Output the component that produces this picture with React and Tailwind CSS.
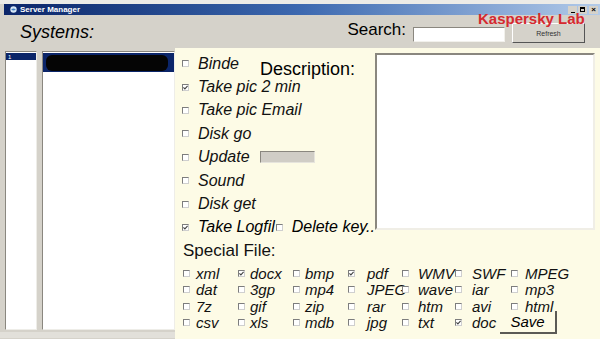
import React from 'react';

const Check = ({ on }) => (
  <span className="inline-flex h-[7px] w-[7px] shrink-0 items-center justify-center border border-t-[#7d7d7d] border-l-[#7d7d7d] border-r-[#cfcfcf] border-b-[#cfcfcf] bg-white">
    {on && (
      <svg width="5" height="5" viewBox="0 0 5 5">
        <path d="M0.4 2.4 L1.9 3.9 L4.6 0.9" fill="none" stroke="#444" strokeWidth="1.1" />
      </svg>
    )}
  </span>
);

const files = [
  [['xml'], ['docx', true], ['bmp'], ['pdf', true], ['WMV'], ['SWF'], ['MPEG']],
  [['dat'], ['3gp'], ['mp4'], ['JPEG'], ['wave'], ['iar'], ['mp3']],
  [['7z'], ['gif'], ['zip'], ['rar'], ['htm'], ['avi'], ['html']],
  [['csv'], ['xls'], ['mdb'], ['jpg'], ['txt'], ['doc', true]],
];

const labelGap = ['ml-[6px]', 'ml-[5px]', 'ml-[5px]', 'ml-[12px]', 'ml-[9px]', 'ml-[10px]', 'ml-[7px]'];

const Option = ({ label, on, children }) => (
  <div className="flex h-[23.4px] items-center">
    <Check on={on} />
    <span className="ml-[9px] whitespace-nowrap text-[16px] italic leading-none text-[#111]">{label}</span>
    {children}
  </div>
);

const App = () => {
  return (
    <div className="relative flex h-[339px] w-[600px] flex-col overflow-hidden bg-[#d5d2ca] font-['Liberation_Sans',Arial,sans-serif] text-black">
      {/* title bar */}
      <div className="h-[4px] bg-[#ecebe7]" />
      <div className="ml-[4px] flex h-[11px] items-center bg-linear-to-r from-[#0b2569] via-[#3d69b0] to-[#b3cbe9] pl-[6px] pr-[2px]">
        <svg width="7" height="7" viewBox="0 0 7 7">
          <circle cx="3.5" cy="3.5" r="3.2" fill="#d6e6f5" />
          <path d="M1.2 3.5 Q3.5 1.5 5.8 3.5 Q3.5 5.5 1.2 3.5Z" fill="#3f7fc4" />
        </svg>
        <span className="ml-[3px] text-[8px] font-bold leading-none text-white">Server Manager</span>
        <div className="ml-auto flex gap-[1px]">
          <span className="flex h-[8px] w-[9px] items-end justify-center bg-[#d5d2ca] pb-[1px]">
            <span className="h-[1px] w-[4px] bg-black" />
          </span>
          <span className="flex h-[8px] w-[9px] items-center justify-center bg-[#d5d2ca]">
            <span className="h-[5px] w-[5px] border border-t-2 border-black" />
          </span>
          <span className="ml-[1px] flex h-[8px] w-[9px] items-center justify-center bg-[#d5d2ca] text-[8px] font-bold leading-none">×</span>
        </div>
      </div>

      {/* header */}
      <div className="flex h-[33px] items-start">
        <span className="ml-[20px] mt-[8px] text-[18px] italic leading-none">Systems:</span>
        <div className="ml-auto flex items-start pr-[15px]">
          <span className="mt-[6px] text-[17px] leading-none">Search:</span>
          <div className="ml-[7px] mt-[12px] h-[15px] w-[92px] border border-t-[#8a877f] border-l-[#8a877f] border-r-[#f2f1ec] border-b-[#f2f1ec] bg-white" />
          <button className="ml-[7px] mt-[8px] flex h-[20px] w-[73px] items-center justify-center border border-t-white border-l-white border-r-[#555] border-b-[#555] bg-[#d5d2ca] text-[7px] leading-none text-[#333]">
            Refresh
          </button>
        </div>
      </div>
      <span className="absolute left-[478px] top-[11px] text-[15px] font-bold leading-none text-[#d5292f]">Kaspersky Lab</span>

      {/* body */}
      <div className="flex flex-1">
        <div className="flex w-[175px] flex-col">
          <div className="flex h-[282px] gap-[5px] pl-[5px] pt-[3px]">
            <div className="w-[32px] border border-t-[#8a877f] border-l-[#8a877f] border-r-[#eeede8] border-b-[#eeede8] bg-white pt-[1px]">
              <div className="flex h-[7px] items-center bg-[#0b2569] pl-[2px] text-[6px] leading-none text-white">1</div>
            </div>
            <div className="flex-1 border border-t-[#8a877f] border-l-[#8a877f] border-r-[#eeede8] border-b-[#eeede8] bg-white pt-[1px]">
              <div className="flex h-[19px] items-center bg-[#0b2569] px-[3px]">
                <div className="h-[16px] w-[122px] rounded-[6px] bg-[#050505]" />
              </div>
            </div>
          </div>
          <div className="mt-[2px] h-[6px] bg-[#e2e0da]" />
        </div>

        <div className="flex flex-1 flex-col bg-[#fdfbe6] pl-[7px] pt-[4px]">
          <div className="flex">
            <div className="relative z-10 w-[193px]">
              <Option label="Binde">
                <span className="ml-[21px] mt-[8px] self-start text-[18px] leading-none">Description:</span>
              </Option>
              <Option label="Take pic 2 min" on />
              <Option label="Take pic Email" />
              <Option label="Disk go" />
              <Option label="Update">
                <span className="ml-[10px] h-[12px] w-[55px] border border-t-[#8a877f] border-l-[#8a877f] border-r-[#e6e4dd] border-b-[#e6e4dd] bg-[#d0cdc6]" />
              </Option>
              <Option label="Sound" />
              <Option label="Disk get" />
              <div className="flex h-[23.4px] items-center">
                <div className="flex w-[99px] items-center overflow-hidden">
                  <Check on />
                  <span className="ml-[9px] whitespace-nowrap text-[16px] italic leading-none">Take Logfil</span>
                </div>
                <Check />
                <span className="ml-[9px] whitespace-nowrap bg-[#fdfbe6] text-[16px] italic leading-none">Delete key..</span>
              </div>
            </div>
            <div className="mt-[1px] h-[177px] w-[220px] border-2 border-t-[#8a877f] border-l-[#8a877f] border-r-[#f0eee6] border-b-[#f0eee6] bg-white" />
          </div>

          <div className="flex h-[23.4px] items-center pl-[1px]">
            <span className="text-[17px] leading-none text-[#111]">Special File:</span>
          </div>

          <div className="ml-[1px] mt-[3px] grid grid-cols-[55px_55px_55px_54px_53px_56px_60px] auto-rows-[16.3px]">
            {files.map((row, r) =>
              row.map(([name, on], c) => (
                <div key={`${r}-${c}`} className="flex items-center">
                  <Check on={on} />
                  <span className={`${labelGap[c]} whitespace-nowrap text-[15px] italic leading-none text-[#111]`}>{name}</span>
                </div>
              ))
            )}
            <div className="flex items-start">
              <button className="-ml-[11px] -mt-[3px] flex h-[23px] w-[57px] shrink-0 items-center justify-center border-r-2 border-b-2 border-[#5b5a55] text-[15px] italic leading-none">
                Save
              </button>
            </div>
          </div>
        </div>
      </div>
    </div>
  );
};

export default App;
